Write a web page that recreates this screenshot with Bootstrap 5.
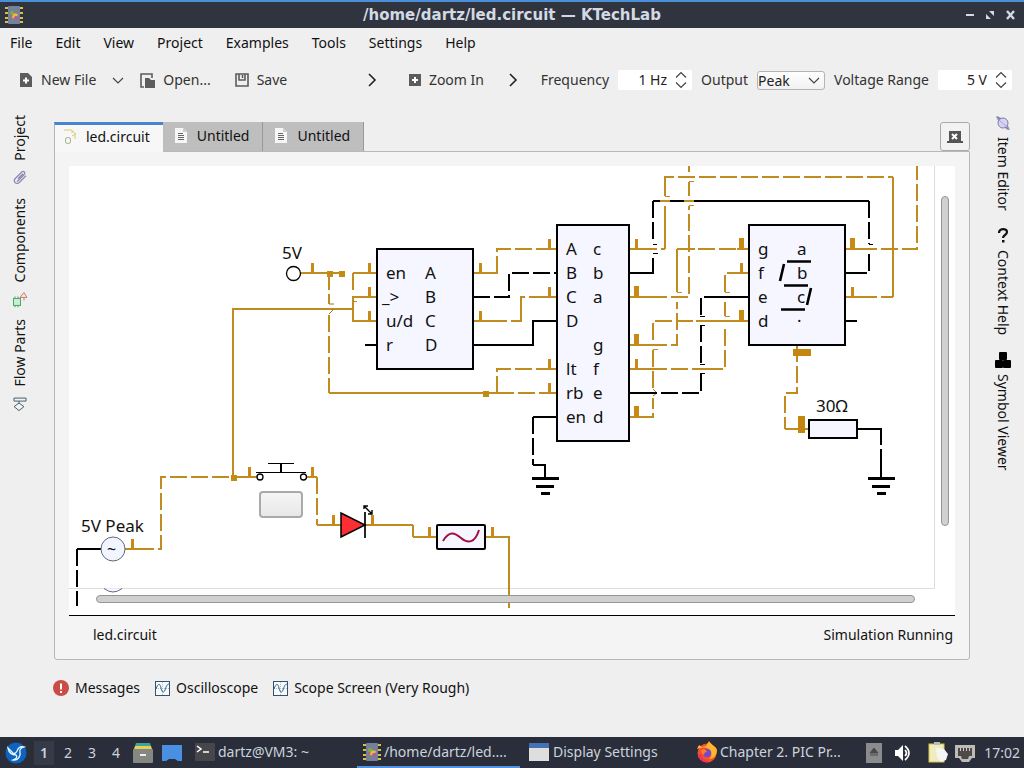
<!DOCTYPE html>
<html lang="en">
<head>
<meta charset="utf-8">
<meta name="viewport" content="width=device-width, initial-scale=1">
<title>/home/dartz/led.circuit — KTechLab</title>
<link href="https://cdn.jsdelivr.net/npm/bootstrap@5.3.0/dist/css/bootstrap.min.css" rel="stylesheet">
<style>
body { font: 14px/20px "Noto Sans", "Open Sans", sans-serif; background: #efefef; color: #111; }
button { color: inherit; }
.plain { background: none; border: 0; padding: 0; white-space: nowrap; }
.titlebar { height: 28px; border-top: 2px solid #4a90d9; background: #2f343f; color: #d3dae3; }
.titlebar h1 { font: bold 15px/20px "DejaVu Sans", sans-serif; padding-left: 36px; }
.menus { height: 30px; gap: 23px; padding: 0 10px; }
.menus a { color: #111; text-decoration: none; }
.toolbars { height: 44px; color: #333; }
.tb-file { width: 37%; padding: 0 2px 0 20px; }
.tb-zoom { width: 14%; padding: 0 4px 0 30px; }
.tb-source { gap: 9px; padding-right: 12px; }
.tb-gap { gap: 8px; }
.spin { background: #fff; height: 20px; width: 74px; border-radius: 2px; padding-right: 5px; }
.spin input { border: 0; background: none; min-width: 0; width: 100%; text-align: right; padding: 0 8px 0 0; color: #222; outline: 0; }
.pick { width: 68px; height: 19px; border: 1px solid #b4b4b4; border-radius: 3px; background: linear-gradient(#fefefe, #f2f2f2); }
.pick select { appearance: none; display: block; border: 0; background: none; padding: 0; width: 100%; height: 17px; line-height: 17px; color: #222; }
.pick svg { position: absolute; right: 4px; top: 5px; pointer-events: none; }
.rail-l, .rail-r { width: 54px; flex: none; padding-top: 13px; align-items: center; }
.rail-l { padding-right: 14px; gap: 12px; }
.rail-r { padding-left: 12px; gap: 17px; }
.rail-l button, .rail-r button { writing-mode: vertical-rl; display: flex; align-items: center; gap: 9px; }
.rail-l button { transform: rotate(180deg); }
.rail-r button { gap: 6px; }
.workspace { padding-top: 20px; }
.doc { height: 29px; padding: 0 13px 2px 11px; gap: 9px; background: #bebebe; border-right: 1px solid #999; }
.doc.on { height: 30px; margin-bottom: -1px; position: relative; background: #f7f7f7; border: 1px solid #b5b5b5; border-width: 3px 0 0 1px; border-top-color: #4a84cc; padding: 0 13px 3px 8px; }
.closer { width: 30px; height: 29px; border: 1px solid #aaa; border-radius: 3px; background: #f2f2f2; padding: 0; }
.pane { border: 1px solid #b8b8b8; border-radius: 0 0 3px 3px; background: #f4f4f4; padding: 14px 14px 0; }
.sheet { border-bottom: 1px solid #000; background: #fff; height: 450px; }
.sheet > svg { width: 100%; height: 443px; display: block; }
.vbar, .hbar { position: absolute; background: #cfd0cf; border: 1px solid #949694; border-radius: 4px; }
.vbar { right: 6px; top: 30px; bottom: 89px; width: 8px; }
.hbar { left: 27px; right: 40px; bottom: 12px; height: 8px; }
.docstatus { height: 43px; padding: 0 2px 6px 24px; }
.views { height: 77px; padding: 0 0 21px 53px; gap: 15px; }
.views button { display: flex; align-items: center; gap: 6px; }
.panel { height: 32px; background: #2a2e3a; color: #ccd3de; }
.desks button { width: 24px; height: 24px; }
.desks button.on { background: #353a47; width: 20px; font-weight: 600; margin: 0 2px; }
.tasks { min-width: 0; }
.tasks button { flex: 0 0 163px; min-width: 0; height: 30px; gap: 2px; margin-right: 4px; display: flex; align-items: center; padding-left: 5px; border-bottom: 2px solid transparent; }
.tasks button.on { border-bottom-color: #5294e2; }
.wire { fill: none; stroke: #c08c20; stroke-width: 2; }
.ink { fill: none; stroke: #000; stroke-width: 2; }
.gaps { stroke-dasharray: 17 4; }
.part { fill: #f5f6ff; stroke: #000; stroke-width: 2; }
.names { font-size: 17px; fill: #111; }
.push { width: 44px; height: 27px; display: block; border: 2px solid #aaa; border-radius: 4px; background: linear-gradient(#f5f5f5, #e8e8e8); }
</style>
</head>
<body class="min-vh-100 d-flex flex-column">
<svg width="0" height="0" class="position-absolute" aria-hidden="true">
  <defs>
    <symbol id="app" viewBox="0 0 20 20">
      <rect x="4" y="1" width="12" height="18" rx="1" fill="#75819a"/>
      <path d="M1 3h3M1 8h3M1 13h3M1 17h3M16 3h3M16 8h3M16 13h3M16 17h3" stroke="#d9bf4a" stroke-width="2"/>
      <path d="M7 6l5 3-5 4z" fill="#e8592c"/><path d="M9 8l5 1-2 5-4-1z" fill="#efb93c"/><circle cx="8" cy="8" r="2" fill="#72b644"/><circle cx="12" cy="13" r="2" fill="#b05a9c"/>
    </symbol>
    <symbol id="page" viewBox="0 0 12 15"><path d="M0 0h8l4 4v11H0z" fill="#f6f6f6"/><path d="M8 0v4h4" fill="#ccc"/><path d="M3 5.500h5M3 7.500h6M3 9.500h6M3 11.500h6" stroke="#666"/></symbol>
    <symbol id="scope" viewBox="0 0 15 15"><rect x=".5" y=".5" width="14" height="14" fill="#f6fafd" stroke="#34526b"/><path d="M1 7.500h13M7.500 1v13" stroke="#a9bdcc" stroke-dasharray="1 1"/><path d="M1 8C3 2 5 2 6 7s3 5 4 2 2-6 4-6" fill="none" stroke="#33658b"/></symbol>
    <symbol id="spinner" viewBox="0 0 12 18"><path d="M1 6.500l5-5 5 5M1 11.500l5 5 5-5" fill="none" stroke="#444" stroke-width="1.200"/></symbol>
    <symbol id="more" viewBox="0 0 8 14"><path d="M1 1l6 6-6 6" fill="none" stroke="#222" stroke-width="1.600"/></symbol>
    <symbol id="down" viewBox="0 0 12 7"><path d="M1 1l5 5 5-5" fill="none" stroke="#444" stroke-width="1.200"/></symbol>
    <symbol id="saturn" viewBox="0 0 15 16"><path d="M1 1c4 0 13 9 13 14-3 0-4-2-7-5S1 5 1 1z" fill="#8986a8"/><circle cx="7.500" cy="8" r="5" fill="#d5d2f8" stroke="#7f7ca6"/><path d="M1 2c1 3 9 8 13 12" fill="none" stroke="#aaa7cc"/></symbol>
  </defs>
</svg>

<header class="titlebar d-flex align-items-center px-1">
  <svg width="20" height="20"><use href="#app"/></svg>
  <h1 class="m-0 flex-grow-1 text-center">/home/dartz/led.circuit — KTechLab</h1>
  <div class="d-flex gap-2 pe-1">
    <button class="plain d-flex" aria-label="Minimize"><svg width="12" height="12"><path d="M2 6h8" stroke="#d3dae3" stroke-width="2"/></svg></button>
    <button class="plain d-flex" aria-label="Restore"><svg width="12" height="12"><path d="M5 2h5v5zM2 5v5h5z" fill="#d3dae3"/></svg></button>
    <button class="plain d-flex" aria-label="Close"><svg width="12" height="12"><path d="M3 2l7 8M10 2l-7 8" stroke="#d3dae3" stroke-width="2.400"/></svg></button>
  </div>
</header>

<nav class="menus d-flex align-items-center" aria-label="Menu bar">
  <a href="#">File</a><a href="#">Edit</a><a href="#">View</a><a href="#">Project</a><a href="#">Examples</a><a href="#">Tools</a><a href="#">Settings</a><a href="#">Help</a>
</nav>

<div class="toolbars d-flex align-items-center" role="toolbar">
  <div class="tb-file d-flex align-items-center">
    <button class="plain d-flex align-items-center tb-gap"><svg width="13" height="14"><path d="M0 0h8l4 4v10H0z" fill="#5c5c5c"/><path d="M3 7.500h6M6 4.500v6" stroke="#fff" stroke-width="2"/></svg>New File</button>
    <button class="plain d-flex ms-3" aria-label="New file options"><svg width="12" height="7"><use href="#down"/></svg></button>
    <button class="plain d-flex align-items-center tb-gap ms-3"><svg width="15" height="15"><path d="M4 14H1V1h11v4" fill="none" stroke="#5c5c5c" stroke-width="1.600"/><path d="M5 5h4l2 2h4v8H5z" fill="#5c5c5c"/></svg>Open...</button>
    <button class="plain d-flex align-items-center tb-gap ms-4"><svg width="14" height="14"><path d="M1 1h12v12H1z" fill="none" stroke="#5c5c5c" stroke-width="1.600"/><path d="M4 1v6h6V1M7.500 2v3" fill="none" stroke="#5c5c5c" stroke-width="1.600"/></svg>Save</button>
    <button class="plain d-flex ms-auto" aria-label="More file actions"><svg width="10" height="14"><use href="#more"/></svg></button>
  </div>
  <div class="tb-zoom d-flex align-items-center">
    <button class="plain d-flex align-items-center tb-gap"><svg width="12" height="12"><path d="M0 0h12v12H0z" fill="#5c5c5c"/><path d="M3 6h6M6 3v6" stroke="#fff" stroke-width="2"/></svg>Zoom In</button>
    <button class="plain d-flex ms-auto" aria-label="More zoom actions"><svg width="10" height="14"><use href="#more"/></svg></button>
  </div>
  <div class="tb-source d-flex align-items-center ms-auto">
    <label for="freq">Frequency</label>
    <span class="spin d-flex align-items-center"><input id="freq" type="text" value="1 Hz"><svg class="flex-shrink-0" width="12" height="18"><use href="#spinner"/></svg></span>
    <label for="out">Output</label>
    <span class="pick position-relative"><select id="out"><option>Peak</option><option>RMS</option></select><svg width="12" height="7"><use href="#down"/></svg></span>
    <label for="volt" class="text-nowrap">Voltage Range</label>
    <span class="spin d-flex align-items-center"><input id="volt" type="text" value="5 V"><svg class="flex-shrink-0" width="12" height="18"><use href="#spinner"/></svg></span>
  </div>
</div>

<main class="d-flex flex-grow-1">
  <nav class="rail-l d-flex flex-column" aria-label="Left tool views">
    <button class="plain"><svg width="16" height="16"><path d="M5 12l7-7c2-2 0-4-2-3L3 9c-2 3 1 6 4 4l7-7M6 9l5-5" transform="rotate(180 8 8)" fill="none" stroke="#8d8bb5" stroke-width="1.300"/></svg>Project</button>
    <button class="plain"><svg width="16" height="16"><g transform="rotate(180 8 8)"><rect x="1.500" y="7" width="7" height="7" fill="#c8efd2" stroke="#4aa868"/><path d="M3 5v2M6 5v2M3 14v2M6 14v2" stroke="#4aa868"/><path d="M8 6l4-5 3 5zM12 6v3" fill="#fbe1dc" stroke="#c78078"/></g></svg>Components</button>
    <button class="plain"><svg width="16" height="16"><path d="M2 2.500h12v3H2zM7 5.500v2M7 7.500l5 3.500-5 4-5-4z" transform="rotate(180 8 8)" fill="#eef4f7" stroke="#4f5f68"/></svg>Flow Parts</button>
  </nav>

  <section class="workspace flex-grow-1 d-flex flex-column">
    <div class="doctabs d-flex align-items-end">
      <button class="plain doc on d-flex align-items-center"><svg width="14" height="16"><path d="M1 1h8v3M9 2l4 3-4 2M12 5v5" fill="none" stroke="#d8cc74"/><rect x="2.500" y="8.500" width="5" height="6" rx="2" fill="#f7f7e8" stroke="#98ad97"/></svg>led.circuit</button>
      <button class="plain doc d-flex align-items-center"><svg width="14" height="15"><use href="#page"/></svg>Untitled</button>
      <button class="plain doc d-flex align-items-center"><svg width="14" height="15"><use href="#page"/></svg>Untitled</button>
      <button class="closer ms-auto" aria-label="Close tab"><svg width="16" height="14"><path d="M2 0h12v10h2v2H0v-2h2z" fill="#555"/><path d="M5 3l5 5M10 3l-5 5" stroke="#fff" stroke-width="2"/></svg></button>
    </div>
    <div class="pane">
      <div class="sheet position-relative">
        <svg viewBox="69 166 886 443" preserveAspectRatio="xMinYMin slice" role="img" aria-label="Circuit diagram">
          <path d="M69 588.500H934.500V166" fill="none" stroke="#ddd"/>
          <!-- live wires, solid runs -->
          <path class="wire" d="M301 273H345M233 477V309H353V297H377M353 273H377M353 309V321H377M329 393H497M473 273H497V269M497 393V378M473 321H490M521 321V301M629 249H640M665 249V206M665 196V185M893 177V297M677 249V292M629 297H650M629 345H650M629 369H650M629 417H640M737 249H749M737 273H749M706 321H749M677 249H695M845 249H860M845 297H860M785 429H809M125 549H137M233 477H257M306 477H317M317 525H341M365 525H413M413 537H437M485 537H509V608M545 249H557M545 297H557M545 369H557M545 393H557"/>
          <!-- live wires, marching runs -->
          <path class="wire gaps" d="M329 273V304M329 315V393M353 273V292M497 273V249H557M490 321H521V297H557M497 393V369H557M497 393H557M640 249H665M665 185V177H893M650 297H689V206M689 196V182M689 172V166M650 345H677V302M677 249H749M650 369H696M706 369H725V326M725 316V302M725 292V273H749M640 417H653V398M653 388V350M653 340V321H696M860 249H917V166M860 297H893M797 345V393H785V429M137 549H161V477H233M317 477V525M413 525V537"/>
          <path d="M329 304h5M334 309l-5 5M653 396l4-3-4-4" fill="none" stroke="#9c7a24"/>
          <path d="M665 196.500h5M689 181.500h5M689 205.500h5M677 292.500h5M725 292.500h5M725 316.500h5M653 349.500h5M353 301.500h4" stroke="#c08c20"/>
          <path class="ink" d="M473 345H533V321H557M365 345H377M557 417H533M629 273H653V258M653 201H660M670 201H684M694 201H869M629 393H640M720 297H749M845 273H857M845 321H857M533 465H545V478M857 429H881V445M881 449V478M101 549H77"/>
          <path class="ink gaps" d="M473 297H509V273H557M533 417V465M653 201V240M869 201V244M869 254V273H857M640 393H701V373M701 363V325M701 315V297H725M77 549V606"/>
          <path d="M653 244.500h4M653 253.500h5M869 244.500h4M700 316.500h5M700 325.500h5M700 364.500h5M700 373.500h5" stroke="#000"/>
          <path class="wire" d="M660 201H670M684 201H694M696 321H706M696 369H706"/>
          <!-- grounds -->
          <path class="ink" style="stroke-width:3" d="M532 478.500h27M536 486.500h18M541 493.500h9M868 478.500h27M872 486.500h18M877 493.500h9"/>
          <!-- voltage bars -->
          <path d="M312.500 263v10M369.500 263v10M369.500 287v10M369.500 311v10M480.500 263v10M480.500 311v10M549.500 239v10M549.500 287v10M549.500 359v10M549.500 383v10M636.500 239v10M636.500 359v10M741.500 263v10M852.500 287v10M132.500 539v10M249.500 467v10M312.500 467v10M333.500 515v10M372.500 515v10M429.500 527v10M492.500 527v10" stroke="#c88a14" stroke-width="3"/>
          <path d="M636.500 286v12M636.500 334v12M636.500 406v12M741.500 238v12M741.500 310v12M852.500 238v12" stroke="#c88a14" stroke-width="5"/>
          <path d="M793 349h18v7h-18zM798 416h7v17h-7z" fill="#c4860e"/>
          <path d="M327 271h6v6h-6zM339 271h6v6h-6zM483 391h6v6h-6zM231 475h6v6h-6z" fill="#c08c14"/>
          <!-- chips -->
          <rect class="part" x="377" y="249" width="96" height="120"/>
          <rect class="part" x="557" y="225" width="72" height="216"/>
          <rect class="part" x="749" y="225" width="96" height="120"/>
          <rect class="part" x="809" y="420" width="48" height="18"/>
          <rect class="part" x="437" y="525" width="48" height="24" rx="1"/>
          <path d="M443 541c6-10 11-9 18-3s14 5 18-8" fill="none" stroke="#a01040" stroke-width="2"/>
          <!-- sources -->
          <circle cx="293.500" cy="273.500" r="7" fill="#fff" stroke="#000" stroke-width="1.300"/>
          <circle cx="113" cy="549" r="12" fill="#f2f5ff" stroke="#5c6a7c"/>
          <path d="M104 588.500q9 7 18 0" fill="#f5f6ff" stroke="#5c6a7c"/>
          <!-- push switch -->
          <path d="M256 472.500h50M268 463.500h26" stroke="#000"/><path d="M281 463v9" stroke="#000" stroke-width="2"/>
          <circle cx="260" cy="477" r="3" fill="#fff" stroke="#000" stroke-width="1.300"/><circle cx="303.500" cy="477" r="3" fill="#fff" stroke="#000" stroke-width="1.300"/>
          <foreignObject x="259" y="491" width="44" height="27"><button class="push" aria-label="Push switch"></button></foreignObject>
          <!-- LED -->
          <path d="M341 513v24l24-12z" fill="#fb2f33" stroke="#000" stroke-width="1.500"/>
          <path d="M365 512v26" stroke="#000" stroke-width="1.700"/>
          <path d="M364 509V506h4M364 506l5 5M368 514h4v-4M372 514l-5-5" fill="none" stroke="#000" stroke-width="1.400"/>
          <!-- lit segments -->
          <path d="M787 261.500h24M784 264l-4 17M784 285.500h24M811 288l-4 17M781 309.500h24" stroke="#000" stroke-width="2.600"/>
          <g class="names">
            <text x="282" y="259">5V</text><text x="81" y="532">5V Peak</text><text x="816" y="412">30Ω</text><text x="107" y="555" style="font-size:16px">~</text>
            <text x="386" y="279">en</text><text x="382" y="303">_&gt;</text><text x="386" y="327">u/d</text><text x="386" y="351">r</text>
            <text x="425" y="279">A</text><text x="425" y="303">B</text><text x="425" y="327">C</text><text x="425" y="351">D</text>
            <text x="566" y="255">A</text><text x="566" y="279">B</text><text x="566" y="303">C</text><text x="566" y="327">D</text><text x="566" y="375">lt</text><text x="566" y="399">rb</text><text x="566" y="423">en</text>
            <text x="593" y="255">c</text><text x="593" y="279">b</text><text x="593" y="303">a</text><text x="593" y="351">g</text><text x="593" y="375">f</text><text x="593" y="399">e</text><text x="593" y="423">d</text>
            <text x="758" y="255">g</text><text x="758" y="279">f</text><text x="758" y="303">e</text><text x="758" y="327">d</text>
            <text x="797" y="255">a</text><text x="797" y="279">b</text><text x="797" y="303">c</text><text x="797" y="327">·</text>
          </g>
        </svg>
        <div class="vbar"></div>
        <div class="hbar"></div>
      </div>
      <div class="docstatus d-flex align-items-center justify-content-between"><span>led.circuit</span><span>Simulation Running</span></div>
    </div>
  </section>

  <nav class="rail-r d-flex flex-column" aria-label="Right tool views">
    <button class="plain"><svg width="16" height="16"><use href="#saturn"/></svg>Item Editor</button>
    <button class="plain"><svg width="16" height="16"><path d="M4 5c0-5 8-5 8-1 0 3-4 3-4 6" fill="none" stroke="#111" stroke-width="2.200"/><path d="M7 12h2.500v2.500H7z" fill="#111"/></svg>Context Help</button>
    <button class="plain"><svg width="16" height="16"><rect x="4" y="0" width="8" height="8" rx="1"/><rect x="0" y="8" width="8" height="8" rx="1"/><rect x="8" y="8" width="8" height="8" rx="1"/></svg>Symbol Viewer</button>
  </nav>
</main>

<nav class="views d-flex align-items-center" aria-label="Bottom tool views">
  <button class="plain"><svg width="16" height="16"><circle cx="8" cy="8" r="8" fill="#cb4b46"/><path d="M8 3.500v6M8 11v2" stroke="#fff" stroke-width="2"/></svg>Messages</button>
  <button class="plain"><svg width="15" height="15"><use href="#scope"/></svg>Oscilloscope</button>
  <button class="plain"><svg width="15" height="15"><use href="#scope"/></svg>Scope Screen (Very Rough)</button>
</nav>

<footer class="panel d-flex align-items-center">
  <button class="plain d-flex ms-1" aria-label="Application menu"><svg width="24" height="24"><circle cx="12" cy="12" r="10.500" fill="#0d63bd"/><path d="M4 7l5 5c2 1 3 0 4-2 1-3 3-5 7-4-3 1-5 2-4 5 1 5-3 9-7 8 3-1 5-3 3-5-4 0-7-2-8-7z" fill="none" stroke="#e8f4ff" stroke-width="1.300"/></svg></button>
  <div class="desks d-flex ms-1"><button class="plain on">1</button><button class="plain">2</button><button class="plain">3</button><button class="plain">4</button></div>
  <div class="d-flex gap-2 ms-1">
    <button class="plain d-flex" aria-label="Files"><svg width="22" height="22"><path d="M4 1h14l1 3H3z" fill="#3fa39b"/><path d="M3 4h16l1 3H2z" fill="#e6cf55"/><rect x="1" y="7" width="20" height="14" rx="1" fill="#858783"/><rect x="8" y="12" width="6" height="2" fill="#eee"/></svg></button>
    <button class="plain d-flex" aria-label="Show desktop"><svg width="20" height="22"><path d="M0 3h20v16h-4l-3-2H7l-3 2H0z" fill="#4a90e2"/></svg></button>
  </div>
  <div class="tasks d-flex flex-grow-1 ms-2">
    <button class="plain"><svg class="flex-shrink-0" width="21" height="20"><rect width="20" height="18" y="1" rx="1" fill="#46474a"/><path d="M2 4l4 3-4 3M8 10h6" fill="none" stroke="#fff" stroke-width="1.500"/></svg><span class="text-truncate">dartz@VM3: ~</span></button>
    <button class="plain on"><svg class="flex-shrink-0" width="20" height="20"><use href="#app"/></svg><span class="text-truncate">/home/dartz/led....</span></button>
    <button class="plain"><svg class="flex-shrink-0" width="22" height="20"><rect y="1" width="20" height="18" fill="#dedede"/><rect y="1" width="20" height="5" fill="#4471b4"/></svg><span>Display Settings</span></button>
    <button class="plain"><svg class="flex-shrink-0" width="22" height="22"><circle cx="11" cy="12" r="9.500" fill="#f4502c"/><path d="M1 8l2-4 3 2 4-1 3-5c1 3 7 5 8 9 0 6-4 9-8 9 4-4 3-9-2-11-4-1-7 0-10 1z" fill="#ffb52e"/><path d="M2 14c1 6 7 8 12 7-5-1-8-3-9-8z" fill="#f32f62"/><circle cx="11" cy="12" r="4" fill="#704ad0"/><path d="M5 9c4-2 5 0 6 2-2 0-3 1-3 3-2-1-3-3-3-5z" fill="#ff7e26"/></svg><span>Chapter 2. PIC Pr...</span></button>
  </div>
  <div class="d-flex align-items-center pe-1">
    <svg width="16" height="20" class="me-2"><rect width="16" height="20" fill="#8a8b8d"/><path d="M8 5l4 5H4zM4 12h8" fill="#4a4a4c" stroke="#4a4a4c"/></svg>
    <svg width="18" height="18" class="ms-1 me-3"><path d="M1 6h3l5-5v16l-5-5H1z" fill="#fff"/><path d="M11 6q3 3 0 6M11 2q8 7 0 14" fill="none" stroke="#fff" stroke-width="1.700"/></svg>
    <svg width="22" height="22" class="me-1"><rect x="1" y="2" width="15" height="18" fill="#f1ebc0" stroke="#d8c445"/><rect x="6" y="0" width="6" height="3" fill="#bbb"/><path d="M8 6l8 1 4 5-2 6-5 2-4-5z" fill="#f5f5f5"/></svg>
    <svg width="22" height="22" class="me-2"><path d="M1 3h20v13h-3l-3 4H8l-3-4H1z" fill="#bcbbb8"/><path d="M4 6h14v8h-3l-1 3H8l-1-3H4z" fill="#4d4a48"/><path d="M6.500 6v3M9.500 6v3M12.500 6v3M15.500 6v3" stroke="#ccc"/></svg>
    <time>17:02</time>
  </div>
</footer>
<script src="https://cdn.jsdelivr.net/npm/bootstrap@5.3.0/dist/js/bootstrap.bundle.min.js"></script>
</body>
</html>
